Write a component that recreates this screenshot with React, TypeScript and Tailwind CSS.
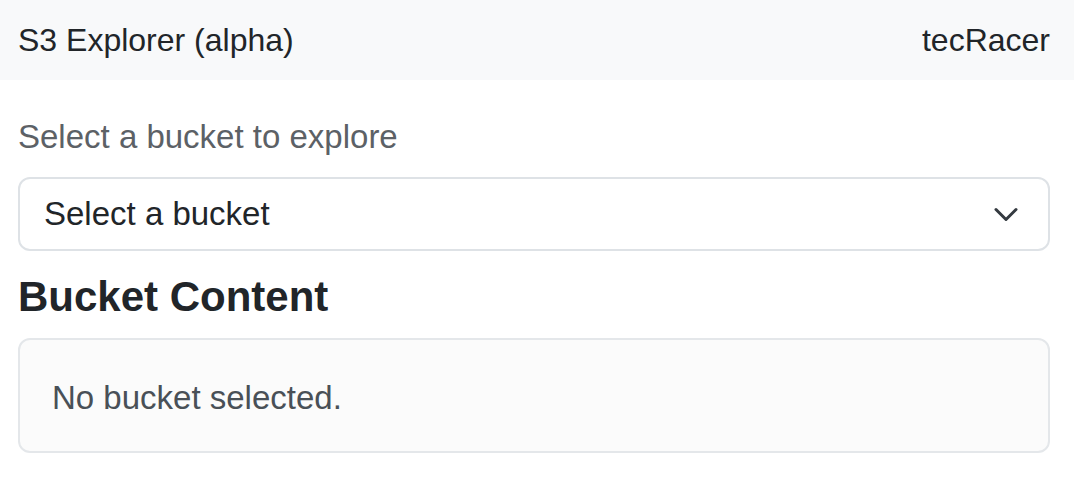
export default function App() {
  return (
    <div className="min-h-screen bg-white text-[#212529] font-['Liberation_Sans',Arial,sans-serif]">
      <header className="h-[80px] bg-[#f8f9fa] flex items-center justify-between pl-[18px] pr-[24px] text-[32px]">
        <span>S3 Explorer (alpha)</span>
        <span>tecRacer</span>
      </header>
      <main className="pl-[18px] pr-[24px]">
        <label className="block mt-[33px] mb-[16px] text-[33px] leading-[48px] text-[#5c6166]">
          Select a bucket to explore
        </label>
        <div className="h-[74px] border-2 border-[#dee2e6] rounded-[12px] flex items-center justify-between pl-[24px] pr-[30px] text-[33px]">
          <span>Select a bucket</span>
          <svg width="24" height="15" viewBox="0 0 24 15" fill="none">
            <path d="M2 2.5l10 10 10-10" stroke="#343a40" strokeWidth="3" strokeLinecap="round" strokeLinejoin="round" />
          </svg>
        </div>
        <h2 className="mt-[21px] mb-[16px] text-[42px] leading-[50px] font-bold">Bucket Content</h2>
        <div className="h-[115px] border-2 border-[#e4e7ea] bg-[#fbfbfb] rounded-[12px] flex items-center pl-[32px] pt-[4px] text-[33px] text-[#495057]">
          No bucket selected.
        </div>
      </main>
    </div>
  );
}
